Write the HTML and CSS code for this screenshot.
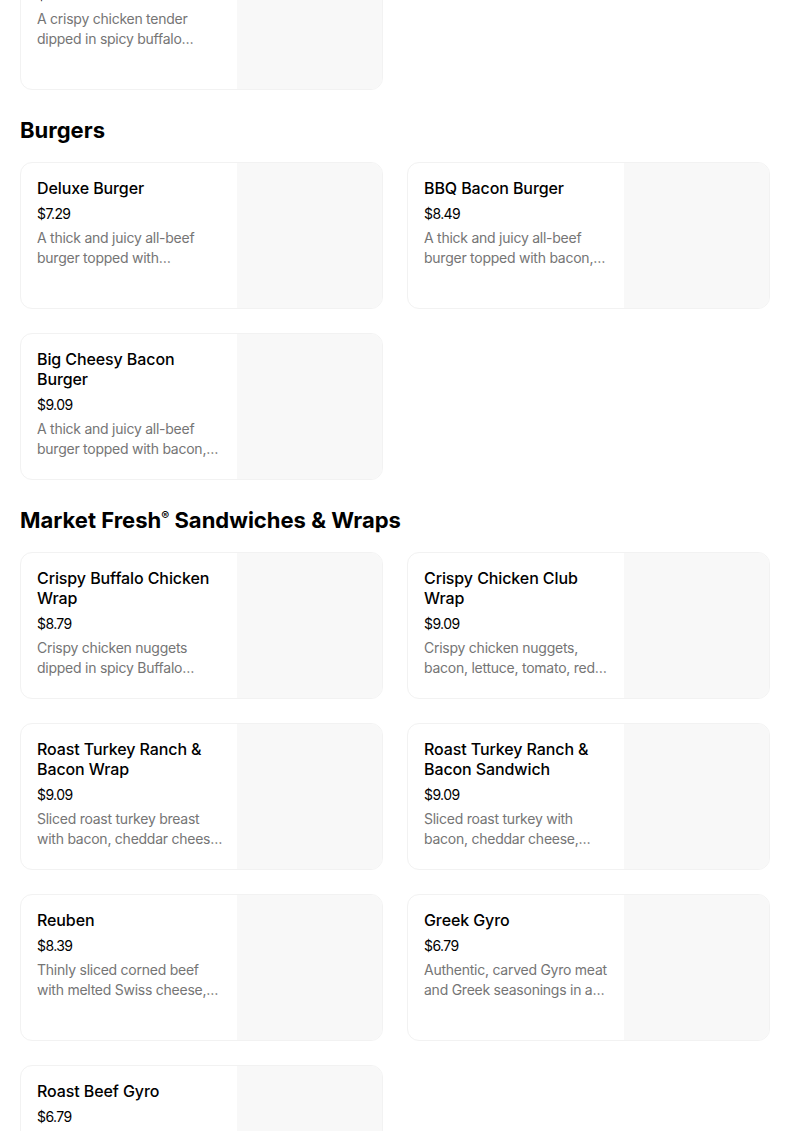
FILE: index.html
```html
<!DOCTYPE html>
<html lang="en">
<head>
<meta charset="utf-8">
<title>Menu</title>
<link rel="stylesheet" href="styles.css">
</head>
<body>
<main class="menu">
  <section class="section section-scrolled">
    <div class="grid">
      <div class="card">
        <div class="info">
          <div class="title">Buffalo Chicken Slider</div>
          <div class="price">$2.49</div>
          <div class="desc">A crispy chicken tender dipped in spicy buffalo…</div>
        </div>
        <div class="thumb"></div>
      </div>
    </div>
  </section>

  <section class="section">
    <h2 class="heading">Burgers</h2>
    <div class="grid">
      <div class="card">
        <div class="info">
          <div class="title">Deluxe Burger</div>
          <div class="price">$7.29</div>
          <div class="desc">A thick and juicy all-beef burger topped with…</div>
        </div>
        <div class="thumb"></div>
      </div>
      <div class="card">
        <div class="info">
          <div class="title">BBQ Bacon Burger</div>
          <div class="price">$8.49</div>
          <div class="desc">A thick and juicy all-beef burger topped with bacon,…</div>
        </div>
        <div class="thumb"></div>
      </div>
      <div class="card">
        <div class="info">
          <div class="title">Big Cheesy Bacon Burger</div>
          <div class="price">$9.09</div>
          <div class="desc">A thick and juicy all-beef burger topped with bacon,…</div>
        </div>
        <div class="thumb"></div>
      </div>
    </div>
  </section>

  <section class="section">
    <h2 class="heading">Market Fresh<sup class="reg">®</sup> Sandwiches &amp; Wraps</h2>
    <div class="grid">
      <div class="card">
        <div class="info">
          <div class="title">Crispy Buffalo Chicken Wrap</div>
          <div class="price">$8.79</div>
          <div class="desc">Crispy chicken nuggets dipped in spicy Buffalo…</div>
        </div>
        <div class="thumb"></div>
      </div>
      <div class="card">
        <div class="info">
          <div class="title">Crispy Chicken Club Wrap</div>
          <div class="price">$9.09</div>
          <div class="desc">Crispy chicken nuggets, bacon, lettuce, tomato, red…</div>
        </div>
        <div class="thumb"></div>
      </div>
      <div class="card">
        <div class="info">
          <div class="title">Roast Turkey Ranch &amp; Bacon Wrap</div>
          <div class="price">$9.09</div>
          <div class="desc">Sliced roast turkey breast with bacon, cheddar chees…</div>
        </div>
        <div class="thumb"></div>
      </div>
      <div class="card">
        <div class="info">
          <div class="title">Roast Turkey Ranch &amp; Bacon Sandwich</div>
          <div class="price">$9.09</div>
          <div class="desc">Sliced roast turkey with bacon, cheddar cheese,…</div>
        </div>
        <div class="thumb"></div>
      </div>
      <div class="card">
        <div class="info">
          <div class="title">Reuben</div>
          <div class="price">$8.39</div>
          <div class="desc">Thinly sliced corned beef with melted Swiss cheese,…</div>
        </div>
        <div class="thumb"></div>
      </div>
      <div class="card">
        <div class="info">
          <div class="title">Greek Gyro</div>
          <div class="price">$6.79</div>
          <div class="desc">Authentic, carved Gyro meat and Greek seasonings in a…</div>
        </div>
        <div class="thumb"></div>
      </div>
      <div class="card">
        <div class="info">
          <div class="title">Roast Beef Gyro</div>
          <div class="price">$6.79</div>
          <div class="desc">Thinly sliced roast beef with Greek seasonings in a…</div>
        </div>
        <div class="thumb"></div>
      </div>
    </div>
  </section>
</main>
</body>
</html>
```

FILE: styles.css
```css
html, body {
  margin: 0;
  padding: 0;
  background: #ffffff;
}

body {
  font-family: Inter, "Noto Sans", "Liberation Sans", sans-serif;
  color: #000000;
  overflow: hidden;
}

.menu {
  width: 750px;
  padding: 0 20px;
}

.section-scrolled {
  margin-top: -57px;
}

.heading {
  margin: 26px 0 18px;
  font-size: 22px;
  line-height: 28px;
  font-weight: 700;
  letter-spacing: 0;
}

.reg {
  font-size: 12px;
  vertical-align: 8px;
  line-height: 0;
  font-weight: 600;
}

.grid {
  display: grid;
  grid-template-columns: 1fr 1fr;
  gap: 24px;
}

.card {
  display: flex;
  height: 145px;
  border: 1px solid #f2f2f2;
  border-radius: 12px;
  overflow: hidden;
  background: #ffffff;
}

.info {
  flex: 1;
  min-width: 0;
  padding: 15px 12px 16px 16px;
}

.title {
  font-size: 16px;
  line-height: 20px;
  font-weight: 500;
  color: #000000;
  letter-spacing: -0.1px;
  padding-right: 4px;
}

.price {
  margin-top: 6px;
  font-size: 14px;
  line-height: 20px;
  color: #000000;
  letter-spacing: -0.6px;
}

.desc {
  margin-top: 4px;
  font-size: 14px;
  line-height: 20px;
  color: #757575;
  letter-spacing: -0.25px;
  display: -webkit-box;
  -webkit-line-clamp: 2;
  -webkit-box-orient: vertical;
  overflow: hidden;
}

.thumb {
  width: 145px;
  flex: none;
  background: #f8f8f8;
}
```
